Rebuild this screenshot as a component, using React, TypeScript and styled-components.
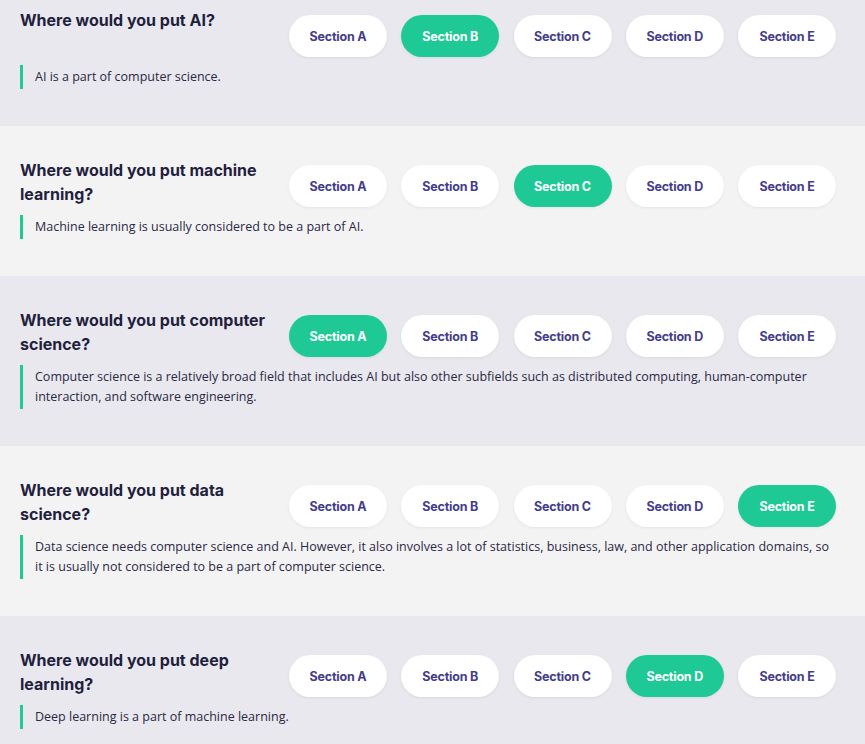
import React from "react";
import styled, { createGlobalStyle } from "styled-components";

const Global = createGlobalStyle`
  html, body { margin: 0; padding: 0; }
  body {
    font-family: "Open Sans", "Noto Sans", sans-serif;
    background: #f4f3f4;
    -webkit-font-smoothing: antialiased;
  }
`;

const Page = styled.div`
  display: flex;
  flex-direction: column;
  width: 865px;
`;

const Block = styled.section<{ $shade: boolean; $first?: boolean }>`
  background: ${(p) => (p.$shade ? "#e9e8ee" : "#f4f3f4")};
  padding: ${(p) => (p.$first ? "8px" : "32px")} 29px 37px 20px;
  display: flex;
  flex-direction: column;
  gap: 8px;
`;

const Head = styled.div`
  display: flex;
  align-items: flex-start;
`;

const Title = styled.h3`
  flex: 1;
  margin: 0 18px 0 0;
  font-family: "Inter", "Lato", sans-serif;
  font-weight: 700;
  font-size: 16px;
  line-height: 24px;
  color: #221f3d;
`;

const Options = styled.div`
  display: flex;
  gap: 14.25px;
  margin-top: 7px;
`;

const Option = styled.button<{ $on: boolean }>`
  width: 98px;
  height: 42px;
  border: none;
  border-radius: 21px;
  background: ${(p) => (p.$on ? "#1ec995" : "#ffffff")};
  color: ${(p) => (p.$on ? "#ffffff" : "#433d8b")};
  box-shadow: 0 1px 3px rgba(40, 30, 80, 0.08);
  font-family: "Inter", "Lato", sans-serif;
  font-weight: 700;
  font-size: 12.5px;
  letter-spacing: -0.2px;
  padding: 0;
  cursor: pointer;
`;

const Note = styled.p`
  margin: 0;
  border-left: 3px solid #1ec995;
  padding: 2px 0 2px 12px;
  max-width: 800px;
  font-family: "Open Sans", "Noto Sans", sans-serif;
  font-size: 12.5px;
  line-height: 20px;
  color: #2a2844;
`;

const items = [
  { q: "Where would you put AI?", pick: 1, note: "AI is a part of computer science." },
  {
    q: "Where would you put machine learning?",
    pick: 2,
    note: "Machine learning is usually considered to be a part of AI.",
  },
  {
    q: "Where would you put computer science?",
    pick: 0,
    note: "Computer science is a relatively broad field that includes AI but also other subfields such as distributed computing, human-computer interaction, and software engineering.",
  },
  {
    q: "Where would you put data science?",
    pick: 4,
    note: "Data science needs computer science and AI. However, it also involves a lot of statistics, business, law, and other application domains, so it is usually not considered to be a part of computer science.",
  },
  {
    q: "Where would you put deep learning?",
    pick: 3,
    note: "Deep learning is a part of machine learning.",
  },
];

const letters = ["A", "B", "C", "D", "E"];

export default function App() {
  return (
    <>
      <Global />
      <Page>
        {items.map((it, i) => (
          <Block key={i} $shade={i % 2 === 0} $first={i === 0}>
            <Head>
              <Title>{it.q}</Title>
              <Options>
                {letters.map((l, j) => (
                  <Option key={l} $on={j === it.pick}>
                    Section {l}
                  </Option>
                ))}
              </Options>
            </Head>
            <Note>{it.note}</Note>
          </Block>
        ))}
      </Page>
    </>
  );
}
